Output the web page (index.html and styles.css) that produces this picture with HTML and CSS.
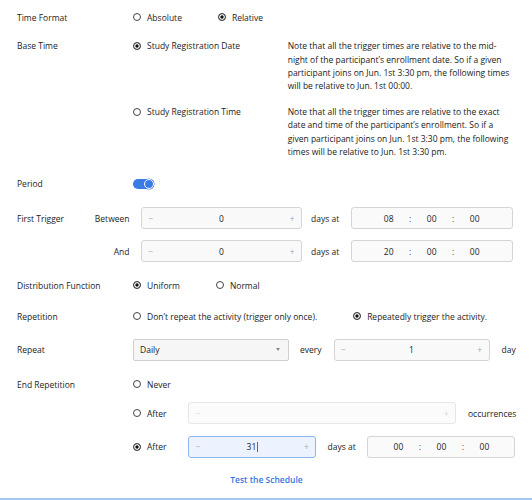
FILE: index.html
```html
<!DOCTYPE html>
<html>
<head>
<meta charset="utf-8">
<link rel="stylesheet" href="styles.css">
</head>
<body>
<div class="form">
  <div class="row row-time">
    <div class="label">Time Format</div>
    <div class="options">
      <span class="radio"><span class="dot"></span>Absolute</span>
      <span class="radio"><span class="dot on"></span>Relative</span>
    </div>
  </div>

  <div class="row row-base">
    <div class="label label-top">Base Time</div>
    <div class="base-list">
      <div class="base-item">
        <span class="radio base-choice"><span class="dot on"></span>Study Registration Date</span>
        <p class="note">Note that all the trigger times are relative to the mid-night of the participant’s enrollment date. So if a given participant joins on Jun. 1st 3:30 pm, the following times will be relative to Jun. 1st 00:00.</p>
      </div>
      <div class="base-item">
        <span class="radio base-choice"><span class="dot"></span>Study Registration Time</span>
        <p class="note">Note that all the trigger times are relative to the exact date and time of the participant’s enrollment. So if a given participant joins on Jun. 1st 3:30 pm, the following times will be relative to Jun. 1st 3:30 pm.</p>
      </div>
    </div>
  </div>

  <div class="row row-period">
    <div class="label">Period</div>
    <span class="toggle"><span class="knob"></span></span>
  </div>

  <div class="row row-first">
    <div class="label label-split"><span>First Trigger</span><span>Between</span></div>
    <div class="stepper stepper-trigger"><span class="sign">−</span><span class="value">0</span><span class="sign">+</span></div>
    <span class="unit unit-days">days at</span>
    <div class="timebox timebox-trigger"><span class="field">08</span><span class="colon">:</span><span class="field">00</span><span class="colon">:</span><span class="field">00</span></div>
  </div>

  <div class="row row-and">
    <div class="label label-split"><span></span><span>And</span></div>
    <div class="stepper stepper-trigger"><span class="sign">−</span><span class="value">0</span><span class="sign">+</span></div>
    <span class="unit unit-days">days at</span>
    <div class="timebox timebox-trigger"><span class="field">20</span><span class="colon">:</span><span class="field">00</span><span class="colon">:</span><span class="field">00</span></div>
  </div>

  <div class="row row-dist">
    <div class="label">Distribution Function</div>
    <div class="options">
      <span class="radio"><span class="dot on"></span>Uniform</span>
      <span class="radio"><span class="dot"></span>Normal</span>
    </div>
  </div>

  <div class="row row-rep">
    <div class="label">Repetition</div>
    <div class="options">
      <span class="radio"><span class="dot"></span>Don’t repeat the activity (trigger only once).</span>
      <span class="radio"><span class="dot on"></span>Repeatedly trigger the activity.</span>
    </div>
  </div>

  <div class="row row-repeat">
    <div class="label">Repeat</div>
    <div class="select"><span>Daily</span><span class="caret"></span></div>
    <span class="unit unit-every">every</span>
    <div class="stepper stepper-every"><span class="sign">−</span><span class="value">1</span><span class="sign">+</span></div>
    <span class="unit unit-day">day</span>
  </div>

  <div class="row row-end">
    <div class="label">End Repetition</div>
    <div class="end-list">
      <div class="end-item end-never">
        <span class="radio"><span class="dot"></span>Never</span>
      </div>
      <div class="end-item end-occ">
        <span class="radio end-choice"><span class="dot"></span>After</span>
        <div class="stepper stepper-disabled stepper-occ"><span class="sign">−</span><span class="value"></span><span class="sign">+</span></div>
        <span class="unit unit-occ">occurrences</span>
      </div>
      <div class="end-item end-days">
        <span class="radio end-choice"><span class="dot on"></span>After</span>
        <div class="stepper stepper-focus stepper-end"><span class="sign">−</span><span class="value">31<span class="cursor"></span></span><span class="sign">+</span></div>
        <span class="unit unit-days">days at</span>
        <div class="timebox timebox-end"><span class="field">00</span><span class="colon">:</span><span class="field">00</span><span class="colon">:</span><span class="field">00</span></div>
      </div>
    </div>
  </div>

  <div class="row row-test">
    <a class="test-link">Test the Schedule</a>
  </div>
</div>
<div class="bottom-line"></div>
</body>
</html>
```

FILE: styles.css
```css
html, body {
  margin: 0;
  padding: 0;
  background: #ffffff;
}

body {
  font-family: "Open Sans", "Noto Sans", sans-serif;
  font-size: 8.5px;
  color: #1c1c1c;
  width: 532px;
  overflow: hidden;
}

.form {
  display: flex;
  flex-direction: column;
  padding: 0 16px 0 17px;
}

.row {
  display: flex;
  align-items: center;
  height: 22px;
}

.label {
  width: 116px;
  flex: none;
  height: 22px;
  display: flex;
  align-items: center;
  color: #1c1c1c;
}

.label-top {
  height: 13.33px;
  line-height: 13.33px;
}

.label-split {
  width: 124px;
  justify-content: space-between;
  padding-right: 11.5px;
  box-sizing: border-box;
}

/* row vertical placement */
.row-time { margin-top: 6px; }
.row-base { margin-top: 11.33px; height: auto; align-items: flex-start; }
.row-period { margin-top: 14.6px; }
.row-first { margin-top: 12.4px; }
.row-and { margin-top: 11px; }
.row-dist { margin-top: 12px; }
.row-rep { margin-top: 9px; }
.row-repeat { margin-top: 11.6px; }
.row-end { margin-top: 12.3px; height: auto; align-items: flex-start; }
.row-test { margin-top: 11px; justify-content: center; }

/* radios */
.options {
  display: flex;
  align-items: center;
  gap: 36px;
}

.radio {
  display: inline-flex;
  align-items: center;
  gap: 6px;
  white-space: nowrap;
  color: #1c1c1c;
}

.dot {
  width: 8px;
  height: 8px;
  box-sizing: border-box;
  border: 1px solid #444444;
  border-radius: 50%;
  background: #ffffff;
  flex: none;
}

.dot.on {
  background: #111111;
  box-shadow: inset 0 0 0 1.3px #ffffff;
}

/* base time */
.base-list {
  display: flex;
  flex-direction: column;
  gap: 12.4px;
}

.base-item {
  display: flex;
  align-items: flex-start;
}

.base-choice {
  width: 154.7px;
  height: 13.33px;
  line-height: 13.33px;
}

.note {
  margin: 0;
  width: 225px;
  line-height: 13.33px;
  color: #222222;
}

/* toggle */
.toggle {
  position: relative;
  width: 21px;
  height: 10px;
  border-radius: 5px;
  background: #3a7be6;
  display: inline-block;
}

.toggle .knob {
  position: absolute;
  right: 0;
  top: 0;
  width: 10px;
  height: 10px;
  box-sizing: border-box;
  border-radius: 50%;
  background: #3a7be6;
  border: 1px solid #ffffff;
  box-shadow: 0 0 0 0.5px #3a7be6;
}

/* steppers */
.stepper {
  display: grid;
  grid-template-columns: auto 1fr auto;
  align-items: center;
  height: 22px;
  box-sizing: border-box;
  border: 1px solid #d5d5d5;
  border-radius: 3px;
  background: #f9f9f9;
  padding: 0 6.5px;
  flex: none;
}

.stepper .sign {
  color: #a8a8a8;
  font-size: 8.5px;
}

.stepper .value {
  text-align: center;
  color: #1d1d1d;
}

.stepper-trigger { width: 161px; }
.stepper-every { width: 156px; }
.stepper-occ { width: 268px; }
.stepper-end { width: 128px; }

.stepper-disabled {
  background: #fbfbfb;
  border-color: #e6e6e6;
}

.stepper-disabled .sign {
  color: #d8d8d8;
}

.stepper-focus {
  background: #ecf3fe;
  border-color: #8db5ef;
}

.cursor {
  display: inline-block;
  width: 1.3px;
  height: 10px;
  background: #2f6fdc;
  vertical-align: -2px;
  margin-left: 0.5px;
}

/* units */
.unit {
  flex: none;
  white-space: nowrap;
}

.unit-days { margin: 0 11.5px 0 9px; }
.unit-every { margin: 0 12px 0 11px; }
.unit-day { margin-left: 12px; }
.unit-occ { margin-left: 11.7px; }

.end-days .unit-days { margin: 0 11.6px 0 11.3px; }

/* time boxes */
.timebox {
  display: flex;
  justify-content: center;
  align-items: center;
  height: 22px;
  box-sizing: border-box;
  border: 1px solid #d5d5d5;
  border-radius: 3px;
  background: #fafafa;
  flex: none;
}

.timebox .field {
  width: 26px;
  text-align: center;
  color: #1d1d1d;
}

.timebox .colon {
  width: 17px;
  text-align: center;
  color: #333333;
}

.timebox-trigger { width: 162px; }
.timebox-end { width: 148px; }

/* select */
.select {
  width: 156px;
  height: 22px;
  box-sizing: border-box;
  border: 1px solid #cfcfcf;
  border-radius: 2px;
  background: #f6f6f6;
  display: flex;
  align-items: center;
  justify-content: space-between;
  padding: 0 8px 0 6px;
  flex: none;
}

.caret {
  width: 0;
  height: 0;
  border-left: 2.5px solid transparent;
  border-right: 2.5px solid transparent;
  border-top: 3px solid #8a8a8a;
}

/* end repetition */
.end-list {
  display: flex;
  flex-direction: column;
}

.end-item {
  display: flex;
  align-items: center;
  height: 22px;
}

.end-occ { margin-top: 6.8px; }
.end-days { margin-top: 11.5px; }

.end-choice {
  width: 55.3px;
}

/* link */
.test-link {
  color: #3477e3;
  font-weight: 600;
  text-decoration: none;
  cursor: pointer;
}

.bottom-line {
  margin-top: 7px;
  height: 0;
  border-top: 2px solid #a3c6f4;
  width: 532px;
}
```
